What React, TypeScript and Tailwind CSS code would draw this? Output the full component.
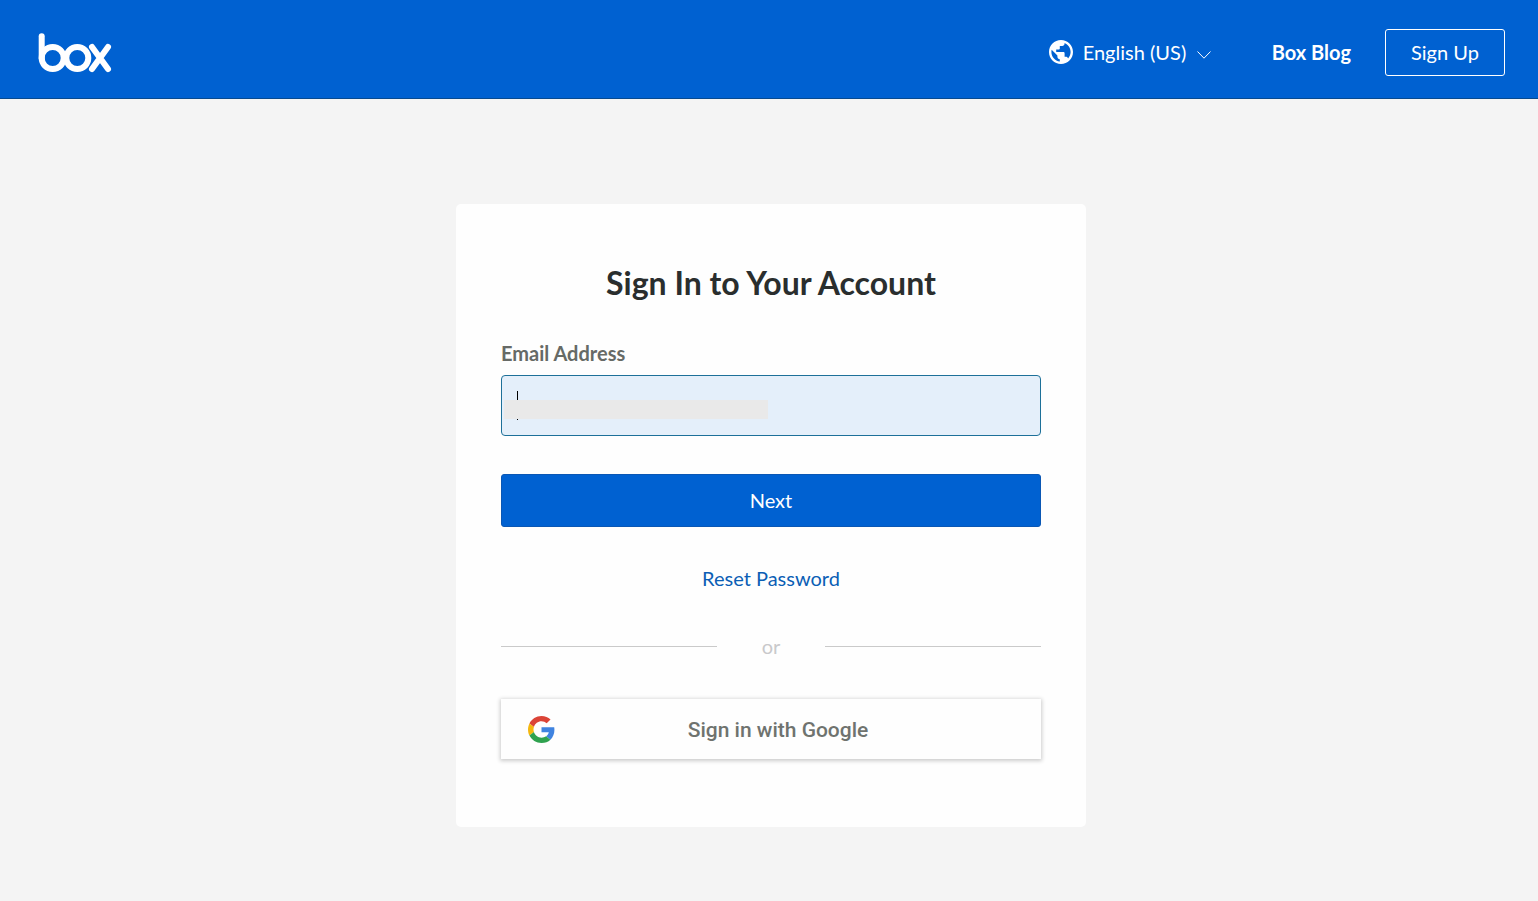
import { useState } from "react";

function BoxLogo() {
  return (
    <svg
      viewBox="0 0 74 40"
      className="w-[74px] h-10"
      fill="none"
      stroke="currentColor"
      strokeWidth="6"
      strokeLinecap="round"
      role="img"
      aria-label="Box"
    >
      <path d="M3.7 3.2v22" />
      <circle cx="14.7" cy="25" r="11" />
      <circle cx="39.3" cy="25" r="11" />
      <path d="M54 14l16 22M70 14L54 36" />
    </svg>
  );
}

function GlobeIcon() {
  return (
    <svg viewBox="2 2 20 20" className="w-6 h-6" fill="currentColor" aria-hidden="true">
      <path d="M12 2C6.48 2 2 6.48 2 12s4.48 10 10 10 10-4.48 10-10S17.52 2 12 2zm-1 17.93c-3.95-.49-7-3.85-7-7.93 0-.62.08-1.21.21-1.79L9 15v1c0 1.1.9 2 2 2v1.93zm6.9-2.54c-.26-.81-1-1.39-1.9-1.39h-1v-3c0-.55-.45-1-1-1H8v-2h2c.55 0 1-.45 1-1V7h2c1.1 0 2-.9 2-2v-.41c2.93 1.19 5 4.06 5 7.41 0 2.08-.8 3.97-2.1 5.39z" />
    </svg>
  );
}

function GoogleIcon() {
  return (
    <svg viewBox="0 0 48 48" className="w-[27px] h-[27px]" aria-hidden="true">
      <path fill="#db4437" d="M24 9.5c3.54 0 6.71 1.22 9.21 3.6l6.85-6.85C35.9 2.38 30.47 0 24 0 14.62 0 6.51 5.38 2.56 13.22l7.98 6.19C12.43 13.72 17.74 9.5 24 9.5z" />
      <path fill="#3f83e0" d="M46.98 24.55c0-1.57-.15-3.09-.38-4.55H24v9.02h12.94c-.58 2.96-2.26 5.48-4.78 7.18l7.73 6c4.51-4.18 7.09-10.36 7.09-17.65z" />
      <path fill="#f4b70f" d="M10.53 28.59c-.48-1.45-.76-2.99-.76-4.59s.27-3.14.76-4.59l-7.98-6.19C.92 16.46 0 20.12 0 24c0 3.88.92 7.54 2.56 10.78l7.97-6.19z" />
      <path fill="#2fa24f" d="M24 48c6.48 0 11.93-2.13 15.89-5.81l-7.73-6c-2.15 1.45-4.92 2.3-8.16 2.3-6.26 0-11.57-4.22-13.47-9.91l-7.98 6.19C6.51 42.62 14.62 48 24 48z" />
    </svg>
  );
}

function Header() {
  return (
    <header className="flex items-center justify-between bg-[#0061d1] border-b border-[#084a8f] text-white pl-[38px] pr-[33px] pt-[29px] pb-[22px]">
      <a href="#home">
        <BoxLogo />
      </a>
      <nav className="flex items-center text-xl leading-[26px]">
        <label htmlFor="language" className="mr-[10px] pb-[2px]">
          <GlobeIcon />
        </label>
        <select id="language" aria-label="Language" className="appearance-none bg-transparent pb-[2px] outline-none">
          <option>English (US)</option>
        </select>
        <svg viewBox="0 0 14 8" className="w-[14px] h-2 ml-[10px] mt-1" fill="none" stroke="currentColor" aria-hidden="true">
          <path d="M.5 .5L7 7.2 13.5 .5" />
        </svg>
        <a href="#blog" className="ml-[61px] pb-[2px] font-bold">
          Box Blog
        </a>
        <a href="#signup" className="ml-[34px] flex h-[47px] w-[120px] items-center justify-center rounded-[3px] border border-white pb-[2px]">
          Sign Up
        </a>
      </nav>
    </header>
  );
}

export default function App() {
  const [email, setEmail] = useState("");

  return (
    <div className="min-h-screen bg-[#f4f4f4] font-['Lato',sans-serif]">
      <Header />
      <main className="flex justify-center px-4 pt-[105px] pb-[74px]">
        <form
          onSubmit={(e) => e.preventDefault()}
          className="w-full max-w-[630px] rounded-[5px] bg-[#fefefe] px-[45px] pt-[58px] pb-[68px] ml-1 text-xl"
        >
          <h1 className="text-center text-[32px] leading-[41px] font-bold text-[#2a2e2e]">Sign In to Your Account</h1>

          <label htmlFor="email" className="mt-9 block font-bold text-[#666a66]">
            Email Address
          </label>
          <div className="relative mt-2">
            <input
              id="email"
              type="email"
              value={email}
              onChange={(e) => setEmail(e.target.value)}
              className="block h-[61px] w-full rounded border border-[#1d7099] bg-[#e4effa] px-4 outline-none"
            />
            <span className="pointer-events-none absolute left-4 top-4 h-[29px] w-px bg-black" />
            <span className="pointer-events-none absolute left-[3px] top-[25px] h-[19px] w-[264px] bg-[#e9e9e9]" />
          </div>

          <button
            type="submit"
            className="mt-[38px] h-[53px] w-full rounded-[3px] border border-[#0a57b4] bg-[#0061d1] pb-[2px] text-white"
          >
            Next
          </button>

          <p className="mt-[37px] text-center">
            <a href="#reset" className="text-[#0b5eb5]">
              Reset Password
            </a>
          </p>

          <div className="mt-10 flex items-center text-[#c9c9cb]">
            <span className="h-px flex-1 bg-[#cacaca]" />
            <span className="w-[108px] text-center">or</span>
            <span className="h-px flex-1 bg-[#cacaca]" />
          </div>

          <button
            type="button"
            className="mt-[39px] flex h-[60px] w-full items-center bg-[#fefefe] pl-[27px] pr-10 font-['Roboto',sans-serif] text-[21px] leading-7 font-medium text-[#6f736f] shadow-[0_1px_4px_1px_rgba(0,0,0,0.2)]"
          >
            <GoogleIcon />
            <span className="flex-1 pt-[2px] text-center">Sign in with Google</span>
          </button>
        </form>
      </main>
    </div>
  );
}
